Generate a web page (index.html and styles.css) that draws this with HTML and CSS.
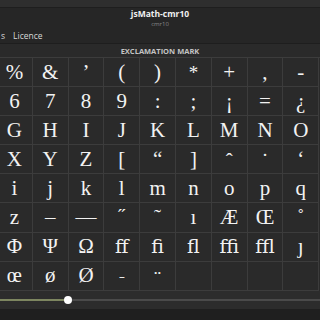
FILE: index.html
```html
<!DOCTYPE html>
<html>
<head>
	<title>jsMath-cmr10</title>
	<meta charset="UTF-8">
	<link rel="stylesheet" href="styles.css">
</head>
<body>
<div id="window">
	<div class="topstrip"></div>
	<div class="header">
		<div class="title">jsMath-cmr10</div>
		<div class="subtitle">cmr10</div>
	</div>
	<div class="tabs">
		<span class="tab">s</span>
		<span class="tab">Licence</span>
	</div>
	<div class="charname">EXCLAMATION MARK</div>
	<div class="grid">
		<span>%</span><span>&amp;</span><span>&#8217;</span><span>(</span><span>)</span><span class="star">*</span><span>+</span><span>,</span><span>-</span>
		<span>6</span><span>7</span><span>8</span><span>9</span><span>:</span><span>;</span><span>&#161;</span><span>=</span><span>&#191;</span>
		<span>G</span><span>H</span><span>I</span><span>J</span><span>K</span><span>L</span><span>M</span><span>N</span><span>O</span>
		<span>X</span><span>Y</span><span>Z</span><span>[</span><span>&#8220;</span><span>]</span><span class="top">&#710;</span><span class="top">&#729;</span><span>&#8216;</span>
		<span>i</span><span>j</span><span>k</span><span>l</span><span>m</span><span>n</span><span>o</span><span>p</span><span>q</span>
		<span>z</span><span>&#8211;</span><span>&#8212;</span><span>&#733;</span><span>&#732;</span><span>&#305;</span><span>&#198;</span><span>&#338;</span><span>&#730;</span>
		<span>&#934;</span><span>&#936;</span><span>&#937;</span><span class="lig">&#64256;</span><span class="lig">&#64257;</span><span class="lig">&#64258;</span><span class="lig">&#64259;</span><span class="lig">&#64260;</span><span>&#567;</span>
		<span>&#339;</span><span>&#248;</span><span>&#216;</span><span class="small">&#727;</span><span class="top">&#168;</span><span></span><span></span><span></span><span></span>
	</div>
	<div class="footer">
		<div class="slider">
			<div class="fill"></div>
			<div class="knob"></div>
		</div>
	</div>
	<div class="bottom"></div>
</div>
</body>
</html>
```
FILE: styles.css
```css
body { margin: 0; background: #202020; font-family: "Open Sans", "Noto Sans", sans-serif; }
#window { width: 320px; height: 320px; overflow: hidden; display: flex; flex-direction: column; background: #2a2a2a; }
.topstrip { height: 7px; background: #2e2e2e; border-bottom: 1px solid #1e1e1e; flex: none; }
.header { height: 20px; background: #262626; display: flex; flex-direction: column; align-items: center; flex: none; }
.title { color: #f0f0f0; font-size: 8.5px; font-weight: bold; line-height: 12px; }
.subtitle { color: #8a8a8a; font-size: 6px; line-height: 8px; }
.tabs { height: 15px; background: #262626; border-bottom: 1px solid #1e1e1e; display: flex; gap: 8px; align-items: center; padding-left: 1px; flex: none; }
.tab { color: #d8d8d8; font-size: 8.5px; }
.charname { height: 13px; line-height: 14px; text-align: center; color: #c4c4c4; font-size: 7.5px; font-weight: bold; border-bottom: 1px solid #3c3c3c; flex: none; }
.grid { display: grid; grid-template-columns: repeat(9, 35.8px); grid-auto-rows: 29.1px; margin-left: -3px; flex: none; }
.grid span { border-right: 1px solid #3c3c3c; border-bottom: 1px solid #3c3c3c; color: #f2f2f2; font-family: "Liberation Serif", "DejaVu Serif", serif; font-size: 21px; display: flex; align-items: center; justify-content: center; line-height: 1; }
.grid .star { align-items: flex-start; padding-top: 5px; font-size: 19px; }
.grid .top { align-items: flex-start; padding-top: 6px; }
.grid .small { font-size: 16px; }
.grid .lig { font-family: "DejaVu Serif", "Liberation Serif", serif; font-size: 19px; }
.footer { height: 18px; background: #2c2c2c; display: flex; align-items: center; flex: none; }
.slider { position: relative; width: 320px; height: 2px; background: #4a4a4a; }
.fill { width: 68px; height: 2px; background: #7d8660; }
.knob { position: absolute; left: 64px; top: -3px; width: 8px; height: 8px; border-radius: 50%; background: #ffffff; }
.bottom { flex: 1; background: #1f1f1f; }
```
